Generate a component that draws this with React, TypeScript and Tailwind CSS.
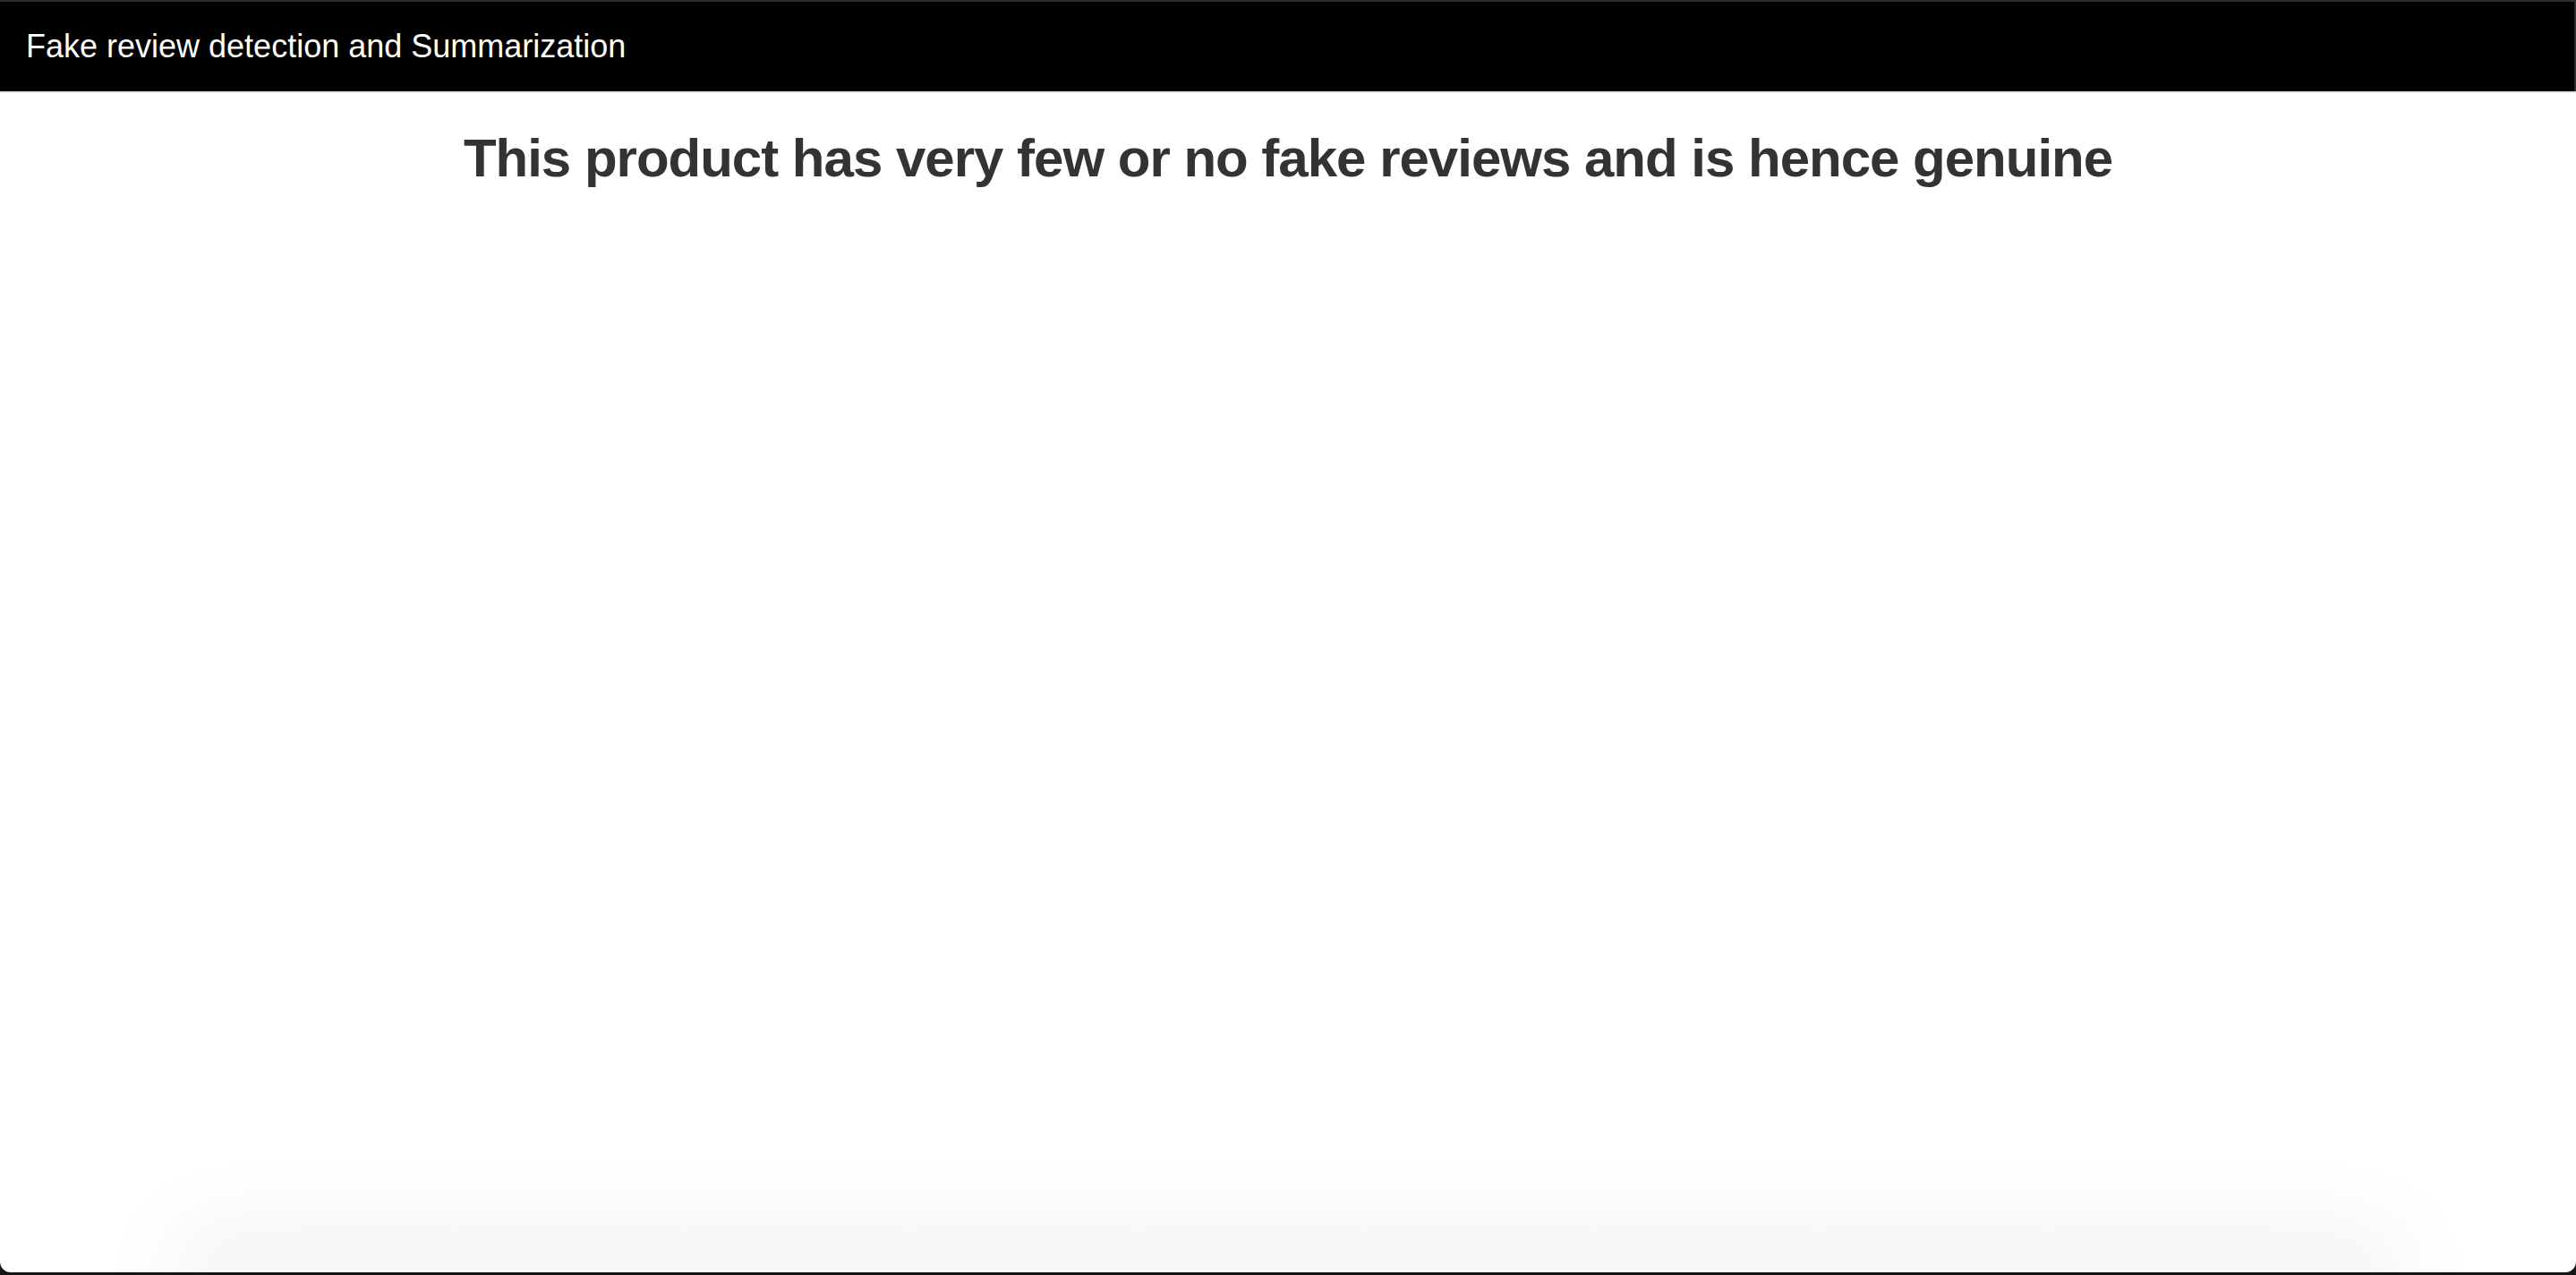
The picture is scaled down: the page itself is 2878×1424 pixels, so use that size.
import React from "react";

export default function App() {
  return (
    <div
      className="h-[1424px] w-[2878px] overflow-hidden bg-[#161616] flex flex-col"
      style={{ fontFamily: '"Liberation Sans", Arial, sans-serif' }}
    >
      <div className="h-[2px] bg-[#2e2e2e] shrink-0" />
      <div className="flex-1 flex flex-col bg-white rounded-b-[12px] overflow-hidden">
        <nav className="h-[100px] shrink-0 bg-black border-r-2 border-[#2e2e2e] flex items-center px-[29px]">
          <span className="text-white text-[36px] leading-[40px]">Fake review detection and Summarization</span>
        </nav>
        <div className="h-[2px] shrink-0 bg-[#e7e7e7]" />
        <main className="flex-1 flex flex-col">
          <h1 className="mt-[40px] text-center text-[60px] leading-[1.1] font-bold tracking-[-1px] text-[#333333]">
            This product has very few or no fake reviews and is hence genuine
          </h1>
          <div className="mt-auto mx-[230px] h-[2px] shadow-[0_0_110px_30px_rgba(0,0,0,0.09)]" />
        </main>
      </div>
      <div className="h-[3px] shrink-0" />
    </div>
  );
}
